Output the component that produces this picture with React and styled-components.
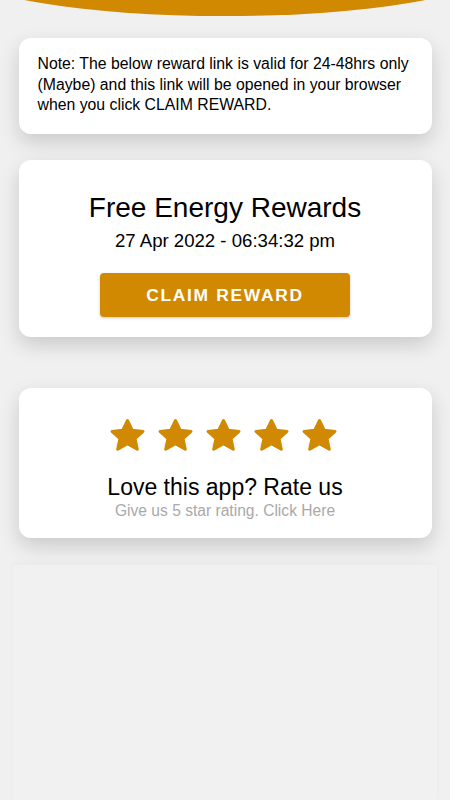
import React from 'react'
import styled, { createGlobalStyle } from 'styled-components'

const Global = createGlobalStyle`
  html, body {
    margin: 0;
    padding: 0;
    background: #f0f0f0;
    overflow-x: hidden;
  }
  body {
    font-family: "Liberation Sans", Arial, sans-serif;
    color: #000;
  }
`

const ORANGE = '#d08900'

const Page = styled.div`
  display: flex;
  flex-direction: column;
  align-items: center;
  min-height: 800px;
  overflow: hidden;
`

const Arc = styled.div`
  flex: none;
  width: 520px;
  height: 88px;
  margin-top: -72px;
  border-radius: 50%;
  background: ${ORANGE};
`

const Card = styled.section`
  box-sizing: border-box;
  width: 413px;
  margin-top: ${p => p.$gap}px;
  background: #fff;
  border-radius: 12px;
  box-shadow: 0 8px 20px rgba(0, 0, 0, 0.16);
  display: flex;
  flex-direction: column;
  align-items: ${p => (p.$center ? 'center' : 'stretch')};
  padding: ${p => p.$pad};
  min-height: ${p => p.$h}px;
`

const Note = styled.p`
  margin: 0;
  font-size: 15.8px;
  line-height: 20.5px;
`

const Title = styled.h2`
  margin: 0;
  font-weight: 400;
  font-size: 28px;
  line-height: 32px;
`

const Stamp = styled.div`
  margin-top: 6px;
  font-size: 18.6px;
  line-height: 22px;
`

const Claim = styled.button`
  margin-top: 21px;
  width: 250px;
  height: 44px;
  border: 0;
  border-radius: 4px;
  background: ${ORANGE};
  color: #fff;
  font-family: inherit;
  font-weight: 700;
  font-size: 17.4px;
  letter-spacing: 1.7px;
  box-shadow: 0 1px 3px rgba(0, 0, 0, 0.22);
`

const Stars = styled.div`
  display: flex;
  gap: 11px;
  margin-right: 3px;
`

const Rate = styled.div`
  margin-top: 22px;
  font-size: 23px;
  line-height: 26px;
`

const Hint = styled.div`
  margin-top: 2px;
  font-size: 15.6px;
  line-height: 18px;
  color: #a9a9a9;
`

const Panel = styled.div`
  margin-top: 27px;
  width: 424px;
  flex: 1;
  background: #f1f1f1;
  box-shadow: 0 -2px 6px rgba(0, 0, 0, 0.03);
`

const Star = () => (
  <svg width="37" height="34" viewBox="0 0 37 34">
    <polygon
      points="18.5,2.5 23.2,12.2 34,13.4 26,20.6 28.3,31.3 18.5,25.8 8.7,31.3 11,20.6 3,13.4 13.8,12.2"
      fill={ORANGE}
      stroke={ORANGE}
      strokeWidth="3"
      strokeLinejoin="round"
    />
  </svg>
)

export default function App() {
  return (
    <Page>
      <Global />
      <Arc />
      <Card $gap={22} $pad="16px 19px 17px" $h={96}>
        <Note>
          Note: The below reward link is valid for 24-48hrs only (Maybe) and
          this link will be opened in your browser when you click CLAIM
          REWARD.
        </Note>
      </Card>
      <Card $gap={26} $center $pad="32px 19px 20px" $h={177}>
        <Title>Free Energy Rewards</Title>
        <Stamp>27 Apr 2022 - 06:34:32 pm</Stamp>
        <Claim>CLAIM REWARD</Claim>
      </Card>
      <Card $gap={51} $center $pad="30px 19px 18px" $h={150}>
        <Stars>
          {[0, 1, 2, 3, 4].map(i => (
            <Star key={i} />
          ))}
        </Stars>
        <Rate>Love this app? Rate us</Rate>
        <Hint>Give us 5 star rating. Click Here</Hint>
      </Card>
      <Panel />
    </Page>
  )
}
